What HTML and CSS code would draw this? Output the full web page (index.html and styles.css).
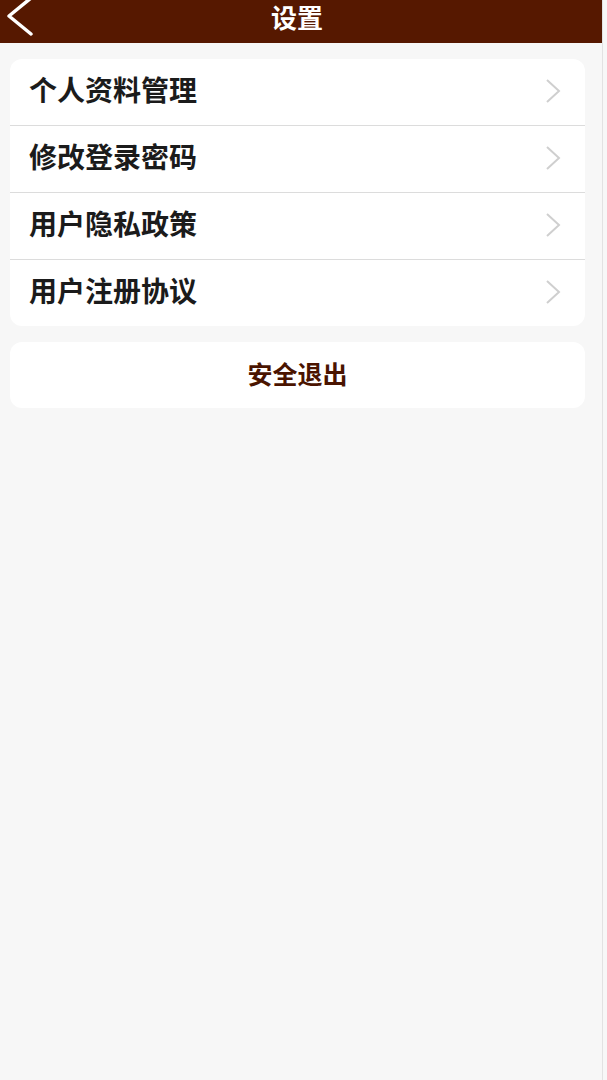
FILE: index.html
```html
<!DOCTYPE html>
<html lang="zh">
<head>
<meta charset="utf-8">
<title>设置</title>
<link rel="stylesheet" href="styles.css">
</head>
<body>
<div class="page">
  <header class="topbar">
    <a class="back" href="#" aria-label="返回">
      <svg width="30" height="40" viewBox="0 0 30 40"><polyline points="24,-2 2,16 24,34" fill="none" stroke="#fff" stroke-width="3.5" stroke-linecap="round" stroke-linejoin="round"/></svg>
    </a>
    <h1 class="title">设置</h1>
  </header>
  <main class="content">
    <ul class="card list">
      <li class="row"><span class="label">个人资料管理</span><svg class="chev" width="16" height="24" viewBox="0 0 16 24"><polyline points="2,1 14,12 2,23" fill="none" stroke="#cfcfcf" stroke-width="2"/></svg></li>
      <li class="row"><span class="label">修改登录密码</span><svg class="chev" width="16" height="24" viewBox="0 0 16 24"><polyline points="2,1 14,12 2,23" fill="none" stroke="#cfcfcf" stroke-width="2"/></svg></li>
      <li class="row"><span class="label">用户隐私政策</span><svg class="chev" width="16" height="24" viewBox="0 0 16 24"><polyline points="2,1 14,12 2,23" fill="none" stroke="#cfcfcf" stroke-width="2"/></svg></li>
      <li class="row"><span class="label">用户注册协议</span><svg class="chev" width="16" height="24" viewBox="0 0 16 24"><polyline points="2,1 14,12 2,23" fill="none" stroke="#cfcfcf" stroke-width="2"/></svg></li>
    </ul>
    <div class="card logout">安全退出</div>
  </main>
</div>
</body>
</html>
```

FILE: styles.css
```css
html, body {
  margin: 0;
  padding: 0;
  background: #f7f7f7;
  font-family: "Noto Sans CJK SC", "Noto Sans", sans-serif;
}
.page {
  width: 603px;
  min-height: 1080px;
  border-right: 1px solid #e2e2e2;
  box-sizing: border-box;
  background: #f7f7f7;
}
.topbar {
  height: 43px;
  box-sizing: border-box;
  padding-top: 3px;
  background: #561800;
  display: flex;
  align-items: flex-start;
  justify-content: center;
  position: relative;
}
.back {
  position: absolute;
  left: 7px;
  top: 0;
  width: 30px;
  height: 40px;
  display: block;
  overflow: hidden;
}
.back svg { display: block; }
.title {
  margin: 0 8px 0 0;
  color: #fff;
  font-size: 26px;
  font-weight: 700;
  line-height: 28px;
}
.content {
  padding: 16px 17px 0 10px;
  display: flex;
  flex-direction: column;
  gap: 16px;
}
.card {
  background: #fff;
  border-radius: 12px;
}
.list {
  list-style: none;
  margin: 0;
  padding: 0;
}
.row {
  height: 66px;
  display: flex;
  align-items: center;
  justify-content: space-between;
  padding: 0 24px 0 19px;
  border-top: 1px solid #dcdcdc;
}
.row:first-child { border-top: none; }
.label {
  font-size: 28px;
  font-weight: 700;
  color: #1b1b1b;
  margin-top: -6px;
}
.chev { display: block; margin-top: -3px; }
.logout {
  height: 66px;
  display: flex;
  align-items: center;
  justify-content: center;
  font-size: 25px;
  font-weight: 700;
  color: #4a1400;
  padding-bottom: 4px;
  box-sizing: border-box;
}
```
